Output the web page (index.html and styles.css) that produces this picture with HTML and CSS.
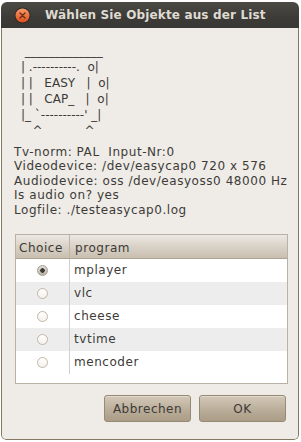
FILE: index.html
```html
<!DOCTYPE html>
<html lang="de">
<head>
    <meta charset="UTF-8">
    <title>Wählen Sie Objekte aus der List</title>
    <link rel="stylesheet" href="styles.css">
</head>
<body>
    <div class="window">
        <div class="titlebar">
            <svg class="close-btn" width="17" height="17" viewBox="0 0 17 17">
                <defs>
                    <linearGradient id="close-fill" x1="0" y1="0" x2="0" y2="1">
                        <stop offset="0" stop-color="#f89a6c"/>
                        <stop offset="1" stop-color="#e04e1a"/>
                    </linearGradient>
                </defs>
                <circle cx="8.5" cy="8.5" r="8" fill="#2b2a27"/>
                <circle cx="8.5" cy="8.5" r="7" fill="url(#close-fill)"/>
                <path d="M6 6 L11 11 M11 6 L6 11" stroke="#6b2c14" stroke-width="1.4" stroke-linecap="round"/>
            </svg>
            <span class="title">Wählen Sie Objekte aus der List</span>
        </div>
        <div class="content">
            <pre class="art"> _____________
| .----------.  o|
| |   EASY   |  o|
| |   CAP_   |  o|
|_ `----------' _|
   ^           ^</pre>
            <div class="info">
                Tv-norm: PAL&nbsp; Input-Nr:0<br>
                Videodevice: /dev/easycap0 720 x 576<br>
                Audiodevice: oss /dev/easyoss0 48000 Hz<br>
                Is audio on? yes<br>
                Logfile: ./testeasycap0.log
            </div>
            <div class="list">
                <div class="list-head">
                    <span class="head-cell">Choice</span>
                    <span class="head-cell head-name">program</span>
                </div>
                <div class="list-row">
                    <span class="cell-radio"><span class="radio checked"></span></span>
                    <span class="cell-name">mplayer</span>
                </div>
                <div class="list-row">
                    <span class="cell-radio"><span class="radio"></span></span>
                    <span class="cell-name">vlc</span>
                </div>
                <div class="list-row">
                    <span class="cell-radio"><span class="radio"></span></span>
                    <span class="cell-name">cheese</span>
                </div>
                <div class="list-row">
                    <span class="cell-radio"><span class="radio"></span></span>
                    <span class="cell-name">tvtime</span>
                </div>
                <div class="list-row">
                    <span class="cell-radio"><span class="radio"></span></span>
                    <span class="cell-name">mencoder</span>
                </div>
            </div>
            <div class="buttons">
                <button class="btn">Abbrechen</button>
                <button class="btn">OK</button>
            </div>
        </div>
    </div>
</body>
</html>
```

FILE: styles.css
```css
body {
    margin: 0;
    background: #ffffff;
    font-family: "DejaVu Sans", sans-serif;
    font-size: 12px;
    color: #3c3b37;
}
.window {
    margin: 2px 0 0 1px;
    width: 298px;
    height: 438px;
    display: flex;
    flex-direction: column;
    border-radius: 6px 6px 5px 5px;
    overflow: hidden;
}
.titlebar {
    height: 26px;
    flex-shrink: 0;
    display: flex;
    align-items: center;
    gap: 14px;
    padding-left: 13px;
    background: linear-gradient(#4a4944, #3c3b37 60%, #383733);
}
.close-btn {
    display: block;
}
.title {
    font-weight: bold;
    color: #dfdbd2;
    letter-spacing: 0.15px;
}
.content {
    flex: 1;
    background: #efebe7;
    border: 1px solid #847863;
    border-top: 0;
    border-radius: 0 0 5px 5px;
    padding: 15px 10px 0 12px;
}
.art {
    margin: 0 0 0 7px;
    font-family: "DejaVu Sans", sans-serif;
    font-size: 12px;
    line-height: 16px;
    height: 96px;
    overflow: hidden;
}
.info {
    margin-top: 6px;
    line-height: 14.4px;
    letter-spacing: 0.55px;
}
.list {
    margin: 17px 0 0 1px;
    height: 150px;
    box-sizing: border-box;
    border: 1px solid #b9b1a4;
    background: #ffffff;
    letter-spacing: 0.55px;
}
.list-head {
    display: grid;
    grid-template-columns: 53px 1fr;
    height: 23px;
    border-bottom: 1px solid #aea391;
    background: linear-gradient(#ece8e2, #d9d2c7 50%, #c8bfb0);
}
.head-cell {
    padding: 3px 0 0 3px;
    line-height: 20px;
}
.head-name {
    border-left: 1px solid #bfb5a5;
    padding-left: 5px;
}
.list-row {
    display: grid;
    grid-template-columns: 53px 1fr;
    height: 23px;
    align-items: center;
}
.list-row:nth-child(odd) {
    background: #ededed;
}
.cell-radio {
    display: flex;
    justify-content: center;
    align-items: center;
    height: 100%;
}
.cell-name {
    height: 100%;
    line-height: 23px;
    padding-left: 4px;
    border-left: 1px solid #cfcfcf;
}
.radio {
    width: 9px;
    height: 9px;
    border-radius: 50%;
    border: 1px solid #c3b6a2;
    background: linear-gradient(#ffffff, #f4f1ec);
}
.radio.checked {
    border-color: #a59d92;
    background: radial-gradient(circle, #3c3b37 0 2px, transparent 2.5px), linear-gradient(#e2ddd6, #b9b2a8);
}
.buttons {
    display: flex;
    justify-content: flex-end;
    gap: 8px;
    margin: 11px 2px 0 0;
}
.btn {
    width: 87px;
    height: 27px;
    border: 1px solid #978a74;
    border-radius: 3px;
    background: linear-gradient(#d3c8b8, #b8ab97 60%, #ab9d88);
    box-shadow: inset 0 1px rgba(255, 255, 255, 0.35);
    font-family: "DejaVu Sans", sans-serif;
    font-size: 12px;
    letter-spacing: 0.5px;
    color: #3c3b37;
    padding: 0;
}
```
